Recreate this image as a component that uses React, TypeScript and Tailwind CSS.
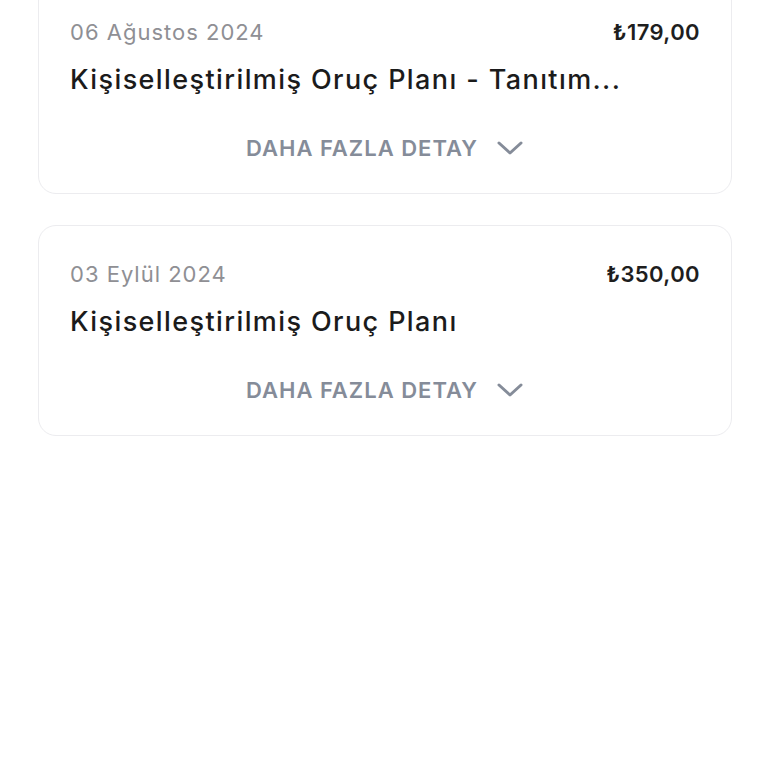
import React from "react";

function Chevron() {
  return (
    <svg width="28" height="18" viewBox="0 0 28 18" fill="none" className="shrink-0">
      <path d="M3 4 L14 14 L25 4" stroke="#858c99" strokeWidth="3" strokeLinecap="round" strokeLinejoin="round" />
    </svg>
  );
}

function Card({ date, price, title }: { date: string; price: string; title: string }) {
  return (
    <div className="rounded-[18px] border border-[#ececef] bg-white pl-[31px] pr-[31px] pt-[35px] pb-[32px]">
      <div className="flex items-center justify-between h-[26px]">
        <span className="text-[22px] leading-[26px] tracking-[1px] text-[#8f8f94]">{date}</span>
        <span className="text-[22px] leading-[26px] tracking-[0.4px] font-semibold text-[#1e1e1e]">{price}</span>
      </div>
      <div className="mt-[19px] h-[32px] text-[27px] leading-[32px] tracking-[1.4px] font-medium text-[#1b1b1b] whitespace-nowrap">
        {title}
      </div>
      <div className="mt-[39px] flex h-[26px] items-center justify-center gap-[18px]">
        <span className="text-[22px] leading-[26px] tracking-[1px] font-semibold text-[#858c99]">DAHA FAZLA DETAY</span>
        <Chevron />
      </div>
    </div>
  );
}

export default function App() {
  return (
    <div className="min-h-[768px] bg-white pl-[38px] pr-[36px]" style={{ fontFamily: "Inter, 'Noto Sans', sans-serif" }}>
      <div className="-mt-[17px] flex flex-col gap-[31px]">
        <Card date="06 Ağustos 2024" price="₺179,00" title="Kişiselleştirilmiş Oruç Planı - Tanıtım..." />
        <Card date="03 Eylül 2024" price="₺350,00" title="Kişiselleştirilmiş Oruç Planı" />
      </div>
    </div>
  );
}
